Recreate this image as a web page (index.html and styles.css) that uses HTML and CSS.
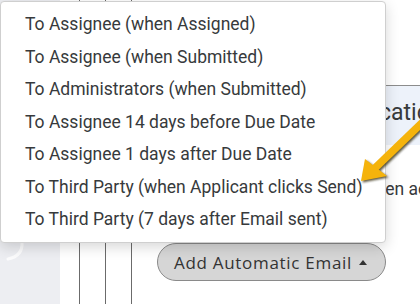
FILE: index.html
```html
<!DOCTYPE html>
<html lang="en">
<head>
    <meta charset="UTF-8">
    <meta name="viewport" content="width=device-width, initial-scale=1.0">
    <title>Automatic Emails</title>
    <link rel="stylesheet" href="styles.css">
</head>
<body>
    <div class="page">
        <div class="sidebar">
            <svg class="sidebar-mark" width="60" height="40" viewBox="0 0 60 40">
                <path d="M22 2 Q23 16 8 19" fill="none" stroke="#ffffff" stroke-width="3" stroke-linecap="round"/>
            </svg>
        </div>

        <div class="main">
            <div class="col">
                <div class="col">
                    <div class="col inner">
                        <div class="due"><span>Due Date</span></div>
                        <div class="panel">Email Notifications</div>
                        <div class="note">Sent when action is taken</div>
                        <button class="add-button" type="button">
                            Add Automatic Email <span class="caret"></span>
                        </button>
                    </div>
                </div>
            </div>
        </div>

        <ul class="dropdown-menu">
            <li class="dropdown-item">To Assignee (when Assigned)</li>
            <li class="dropdown-item">To Assignee (when Submitted)</li>
            <li class="dropdown-item">To Administrators (when Submitted)</li>
            <li class="dropdown-item">To Assignee 14 days before Due Date</li>
            <li class="dropdown-item">To Assignee 1 days after Due Date</li>
            <li class="dropdown-item">To Third Party (when Applicant clicks Send)</li>
            <li class="dropdown-item">To Third Party (7 days after Email sent)</li>
        </ul>

        <svg class="pointer" width="420" height="304" viewBox="0 0 420 304">
            <defs>
                <filter id="soft" x="-20%" y="-20%" width="140%" height="140%">
                    <feGaussianBlur stdDeviation="1"/>
                </filter>
            </defs>
            <g transform="translate(1.5 1.5)" opacity="0.75" filter="url(#soft)">
                <line x1="428" y1="117" x2="374" y2="169" stroke="#2b2100" stroke-width="7.5"/>
                <polygon points="361,181 365,159 387,176" fill="#2b2100"/>
            </g>
            <line x1="428" y1="117" x2="374" y2="169" stroke="#f5b30c" stroke-width="7.5"/>
            <polygon points="361,181 365,159 387,176" fill="#f5b30c"/>
        </svg>
    </div>
</body>
</html>
```

FILE: styles.css
```css
body {
    margin: 0;
    font-family: Roboto, "Liberation Sans", sans-serif;
    color: #373a3c;
    background: #ffffff;
}

.page {
    position: relative;
    display: flex;
    width: 420px;
    height: 304px;
    overflow: hidden;
}

.sidebar {
    width: 60px;
    flex-shrink: 0;
    background: #edeef2;
}

.sidebar-mark {
    display: block;
    margin-top: 240px;
    opacity: 0.85;
}

.main {
    flex: 1;
    min-width: 0;
    padding-left: 19px;
}

.col {
    height: 100%;
    box-sizing: border-box;
    border-left: 1px solid #6b6b6b;
    padding-left: 25px;
}

.col.inner {
    display: flex;
    flex-direction: column;
    align-items: stretch;
    padding-left: 0;
}

.due {
    display: flex;
    align-items: flex-end;
    height: 4px;
    overflow: hidden;
    padding-left: 5px;
    font-size: 17px;
    line-height: 19px;
    flex-shrink: 0;
}

.due span {
    flex-shrink: 0;
    white-space: nowrap;
}

.panel {
    margin-top: 81px;
    height: 60px;
    flex-shrink: 0;
    box-sizing: border-box;
    border-top: 1px solid #8c8c8c;
    background: #edf2fa;
    padding: 12px 0 0 129px;
    font-size: 23px;
    line-height: 30px;
    white-space: nowrap;
    overflow: hidden;
}

.note {
    margin-top: 32px;
    padding-left: 191px;
    font-size: 17.5px;
    line-height: 24px;
    white-space: nowrap;
    overflow: hidden;
    flex-shrink: 0;
}

.add-button {
    display: flex;
    align-items: center;
    gap: 7px;
    flex-shrink: 0;
    margin-top: 42px;
    margin-left: 25px;
    height: 38px;
    width: 229px;
    padding: 0 0 0 16px;
    border: 1px solid #8a8a8a;
    border-radius: 19px;
    background: #d6d6d6;
    color: #333333;
    font-family: "Open Sans", sans-serif;
    font-size: 17px;
    letter-spacing: 0.7px;
    white-space: nowrap;
}

.caret {
    width: 0;
    height: 0;
    border-left: 4.5px solid transparent;
    border-right: 4.5px solid transparent;
    border-bottom: 5px solid #333333;
}

.dropdown-menu {
    position: absolute;
    left: 0;
    top: 1px;
    width: 386px;
    box-sizing: border-box;
    margin: 0;
    padding: 6px 0;
    list-style: none;
    background: #ffffff;
    border: 1px solid #cfcfcf;
    border-radius: 4px;
    box-shadow: 0 4px 14px rgba(0, 0, 0, 0.16);
}

.dropdown-item {
    padding: 4px 24px;
    font-size: 17.5px;
    line-height: 24.5px;
    white-space: nowrap;
}

.pointer {
    position: absolute;
    left: 0;
    top: 0;
    pointer-events: none;
}
```
